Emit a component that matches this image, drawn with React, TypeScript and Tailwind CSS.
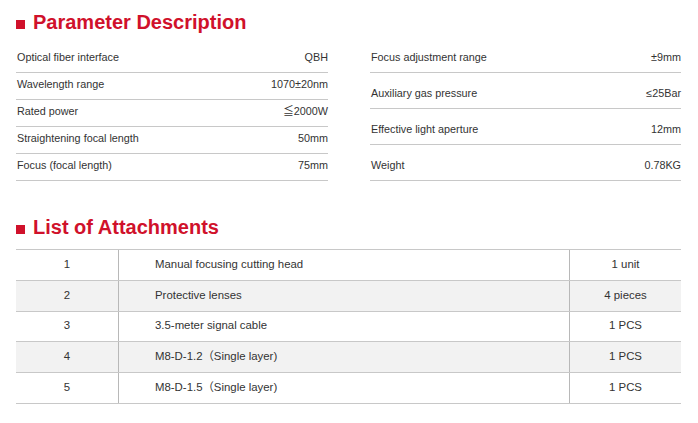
import React from "react";

const leftRows: [string, string][] = [
  ["Optical fiber interface", "QBH"],
  ["Wavelength range", "1070±20nm"],
  ["Rated power", "≦2000W"],
  ["Straightening focal length", "50mm"],
  ["Focus (focal length)", "75mm"],
];

const rightRows: [string, string][] = [
  ["Focus adjustment range", "±9mm"],
  ["Auxiliary gas pressure", "≤25Bar"],
  ["Effective light aperture", "12mm"],
  ["Weight", "0.78KG"],
];

const items: [string, string, string][] = [
  ["1", "Manual focusing cutting head", "1 unit"],
  ["2", "Protective lenses", "4 pieces"],
  ["3", "3.5-meter signal cable", "1 PCS"],
  ["4", "M8-D-1.2（Single layer)", "1 PCS"],
  ["5", "M8-D-1.5（Single layer)", "1 PCS"],
];

function Title({ children }: { children: React.ReactNode }) {
  return (
    <div className="flex items-center h-[24px]">
      <div className="w-[9px] h-[9px] bg-[#d0112b] mt-[5px]" />
      <h2 className="ml-[8px] text-[20px] leading-[24px] font-bold text-[#d0112b]">{children}</h2>
    </div>
  );
}

export default function App() {
  return (
    <div
      className="w-[698px] h-[423px] bg-white pl-[16px] pr-[17px] pt-[10px] text-[#333]"
      style={{ fontFamily: '"Liberation Sans", Arial, "Noto Sans CJK SC", sans-serif' }}
    >
      <Title>Parameter Description</Title>
      <div className="mt-[12px] grid grid-cols-[312px_311px] gap-x-[42px]">
        <div className="flex flex-col">
          {leftRows.map(([k, v]) => (
            <div
              key={k}
              className="h-[27px] flex items-end justify-between pb-[8px] border-b border-[#c8c8c8] text-[10.8px] leading-[14px]"
            >
              <span className="pl-[1px]">{k}</span>
              <span>{v}</span>
            </div>
          ))}
        </div>
        <div className="flex flex-col">
          {rightRows.map(([k, v], i) => (
            <div
              key={k}
              className={`${i === 0 ? "h-[27px]" : "h-[36px]"} flex items-end justify-between pb-[8px] border-b border-[#c8c8c8] text-[10.8px] leading-[14px]`}
            >
              <span className="pl-[1px]">{k}</span>
              <span>{v}</span>
            </div>
          ))}
        </div>
      </div>

      <div className="mt-[34px]">
        <Title>List of Attachments</Title>
      </div>
      <div className="mt-[10px] w-[665px] border-t border-[#c8c8c8] text-[11.4px] leading-[14px]">
        {items.map(([n, name, qty], i) => (
          <div
            key={n}
            className={`grid grid-cols-[102px_451px_1fr] h-[30.8px] border-b border-[#c8c8c8] ${i % 2 === 1 ? "bg-[#f2f2f2]" : "bg-white"}`}
          >
            <div className="flex items-center justify-center pb-[2px]">{n}</div>
            <div className="flex items-center pl-[36px] pb-[2px] border-l border-[#b8b8b8]">{name}</div>
            <div className="flex items-center justify-center pb-[2px] border-l border-[#b8b8b8]">{qty}</div>
          </div>
        ))}
      </div>
    </div>
  );
}
